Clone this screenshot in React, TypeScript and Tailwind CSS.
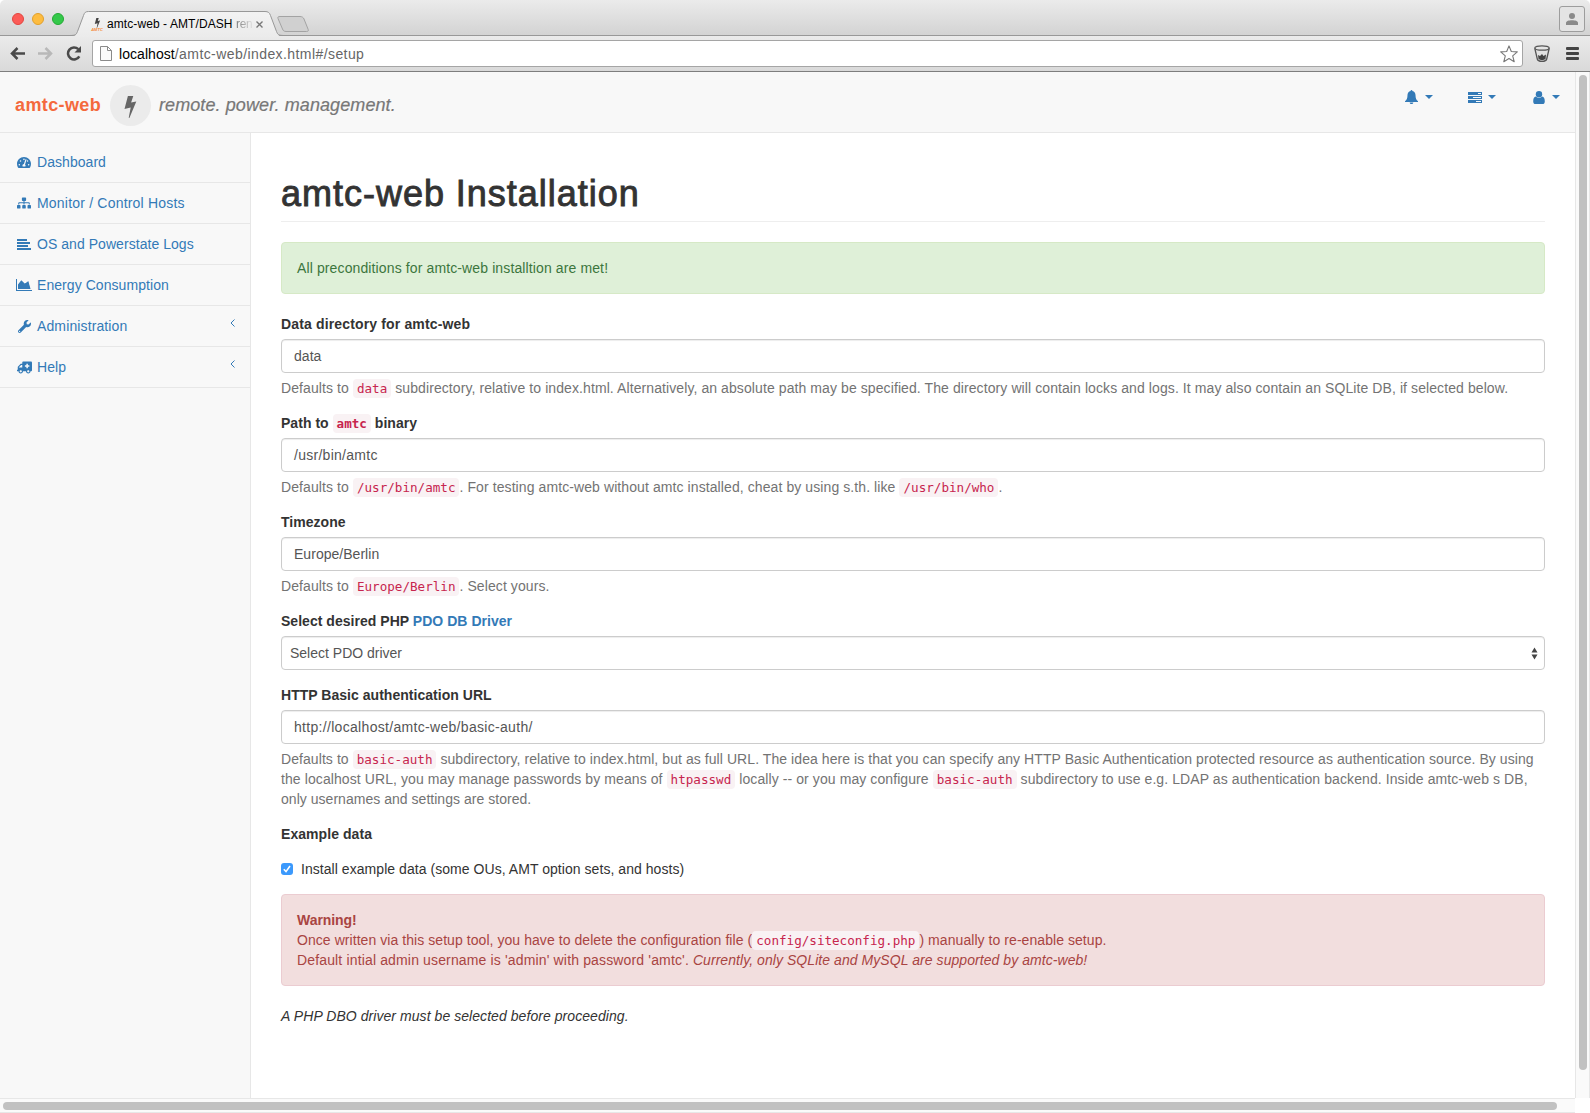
import React from "react";
import { FaSitemap, FaWrench, FaAmbulance, FaTachometerAlt } from "react-icons/fa";

const Code = ({ children, bold = false }: { children: React.ReactNode; bold?: boolean }) => (
  <code
    className={
      "rounded-[4px] bg-[#f9f2f4] px-[4px] py-[2px] font-['DejaVu_Sans_Mono',monospace] text-[12.6px] leading-none tracking-[0px] text-[#c7254e] " +
      (bold ? "font-bold" : "font-normal")
    }
  >
    {children}
  </code>
);

const Label = ({ children, track = "tracking-[0.03px]" }: { children: React.ReactNode; track?: string }) => (
  <label className={"mb-[5px] block h-5 whitespace-nowrap font-bold text-[#333] " + track}>{children}</label>
);

const Field = ({ value, track = "tracking-[0.03px]" }: { value: string; track?: string }) => (
  <div
    className={
      "flex h-[34px] items-center rounded-[4px] border border-[#ccc] bg-white px-3 text-[#555] shadow-[inset_0_1px_1px_rgba(0,0,0,0.075)] " +
      track
    }
  >
    {value}
  </div>
);

const Help = ({ children }: { children: React.ReactNode }) => (
  <div className="mt-[5px] whitespace-nowrap tracking-[0.09px] text-[#737373]">{children}</div>
);

const Caret = () => (
  <svg width="8" height="4" viewBox="0 0 8 4" className="block" fill="currentColor">
    <path d="M0 0h8L4 4z" />
  </svg>
);

const Bolt = ({ className }: { className: string }) => (
  <svg viewBox="0 0 12 22" className={className} fill="currentColor">
    <path d="M3.4 0H8.8L6.6 6.600 11.8 5.400 4.900 22 4.200 21.800 6.200 11.600 0 13z" />
  </svg>
);

const Bell = () => (
  <svg width="13" height="14" viewBox="0.5 0 13 14" fill="currentColor">
    <path d="M7 0c.6 0 .9.4.9.9C10 1.400 11 3.100 11 5c0 3.600.9 5 2.500 6.200V12H.5v-.8C2.100 10 3 8.600 3 5c0-1.900 1-3.600 3.100-4.100C6.100.4 6.400 0 7 0zM5.200 12.400h3.600C8.700 13.400 8 14 7 14s-1.700-.6-1.800-1.600z" />
  </svg>
);

const Tasks = () => (
  <svg width="14" height="11" viewBox="0 0 14 11" shapeRendering="crispEdges">
    <path fill="#337ab7" d="M0 0h14v3H0zM0 4h14v3H0zM0 8h14v3H0z" />
    <path fill="#f8f8f8" d="M10 1h3v1h-3zM5 5h8v1H5zM8 9h5v1H8z" />
  </svg>
);

const User = () => (
  <svg width="12" height="13" viewBox="0 0 12 13" fill="currentColor">
    <circle cx="6" cy="3.200" r="3.200" />
    <path d="M2.900 5.600C1 5.900.2 8 .2 10.400.2 12 1.100 13 2.500 13h7c1.400 0 2.300-1 2.300-2.600 0-2.400-.8-4.500-2.700-4.800C8.300 6.400 7.300 6.900 6 6.900s-2.300-.5-3.100-1.300z" />
  </svg>
);

const Lines = () => (
  <svg width="14" height="11" viewBox="0 0 14 11" fill="currentColor" shapeRendering="crispEdges">
    <path d="M0 0h10v2H0zM0 3h13v2H0zM0 6h11v2H0zM0 9h14v2H0z" />
  </svg>
);

const Area = () => (
  <svg width="16" height="12" viewBox="0 0 16 12" fill="currentColor">
    <path d="M0 0h1v11h15v1H0zM2 10V5.500L5.300 1.300 8.700 4.600 12 3l2.200 7z" />
    <path d="M9 5l3.300-3L14.500 10H9z" />
  </svg>
);

const menu: { label: string; icon: React.ReactNode; sub?: boolean; w: string }[] = [
  { label: "Dashboard", icon: <FaTachometerAlt className="ml-px h-[13px] w-[14px]" />, w: "tracking-[0.05px]" },
  { label: "Monitor / Control Hosts", icon: <FaSitemap className="ml-px h-[12px] w-[14px]" />, w: "tracking-[0.2px]" },
  { label: "OS and Powerstate Logs", icon: <span className="ml-px"><Lines /></span>, w: "tracking-[0.05px]" },
  { label: "Energy Consumption", icon: <Area />, w: "tracking-[0.06px]" },
  { label: "Administration", icon: <FaWrench className="ml-[2px] h-[13px] w-[13px]" />, sub: true, w: "tracking-[0.12px]" },
  { label: "Help", icon: <FaAmbulance className="ml-px h-[13px] w-[15px] -scale-x-100" />, sub: true, w: "tracking-[0.1px]" },
];

const TopBar = () => (
  <div className="relative h-9 shrink-0 rounded-t-[5px] border-b border-[#989898] bg-linear-to-b from-[#ebebeb] to-[#d3d3d3]">
    <div className="flex h-full items-center gap-2 pl-3 pt-[3px]">
      <i className="size-3 rounded-full border border-[#e2463f] bg-[#fc5b57]" />
      <i className="size-3 rounded-full border border-[#e1a02c] bg-[#fdbc40]" />
      <i className="size-3 rounded-full border border-[#24a934] bg-[#34c84a]" />
    </div>
    <svg className="absolute left-[70px] top-[10px]" width="245" height="27" viewBox="0 0 245 27">
      <defs>
        <linearGradient id="tab" x1="0" y1="0" x2="0" y2="1">
          <stop offset="0" stopColor="#f3f3f3" />
          <stop offset="1" stopColor="#ebebeb" />
        </linearGradient>
      </defs>
      <path d="M3 26C6.500 25.500 6.500 24 7.500 21.500L13.500 5.500C14.500 2.500 15.500 1.500 18.500 1.500H195C198 1.500 199.500 2.500 200.500 5.500L206.500 21.500C207.500 24 208 25.500 211 26.500V27H3z" fill="url(#tab)" />
      <path d="M0 25.500C6 25.500 6.500 24 7.500 21.500L13.500 5.500C14.500 2.500 15.500 1.500 18.500 1.500H195C198 1.500 199.500 2.500 200.500 5.500L206.500 21.500C207.500 24 208 25.500 214 25.500" fill="none" stroke="#989898" />
      <path d="M210 6.500H230C232 6.500 233.500 7.500 234 9L238.200 19.500C238.700 21 238 21.500 236.500 21.500H216C214 21.500 213 20.500 212.500 19L208 8.500C207.500 7 208.200 6.500 210 6.500z" fill="#d0d0d0" stroke="#a3a3a3" />
    </svg>
    <div className="absolute left-[91px] top-[17px] flex h-[14px] items-center">
      <div className="flex w-3 flex-col items-center text-[#444]">
        <Bolt className="h-[10px] w-[7px]" />
        <span className="h-[3px] text-[4px] font-bold italic leading-[3px] text-[#f58a33]">AMTC</span>
      </div>
      <span className="ml-1 w-[145px] whitespace-nowrap text-[12px] leading-[14px] tracking-[0.08px] text-black">
        amtc-web - AMT/DASH{" "}
        <span className="bg-linear-to-r from-[#777] to-[#ddd] bg-clip-text tracking-[-0.3px] text-transparent">ren</span>
      </span>
      <svg className="ml-[4px]" width="7" height="7" viewBox="0 0 7 7" stroke="#777" strokeWidth="1.400">
        <path d="M.5.5l6 6M6.500.5l-6 6" />
      </svg>
    </div>
    <div className="absolute right-[5px] top-[6px] flex h-[26px] w-[26px] items-center justify-center rounded-[3px] border border-[#9d9d9d] bg-[#e4e4e4]">
      <svg width="12" height="12" viewBox="0 0 12 12" fill="#8a8a8a">
        <circle cx="6" cy="3" r="3" />
        <path d="M0 12V10C0 8 3 7.300 6 7.300s6 .7 6 2.700v2z" />
      </svg>
    </div>
  </div>
);

const Toolbar = () => (
  <div className="flex h-9 shrink-0 items-center border-b border-[#7e7e7e] bg-linear-to-b from-[#ebebeb] to-[#d9d9d9] pl-[10px]">
    <svg width="15" height="13" viewBox="0 0 15 13" fill="none" stroke="#4a4a4a" strokeWidth="2.500">
      <path d="M15 6.500H2M7.500 1L2 6.500 7.500 12" />
    </svg>
    <svg className="ml-[13px]" width="15" height="13" viewBox="0 0 15 13" fill="none" stroke="#b8b8b8" strokeWidth="2.500">
      <path d="M0 6.500H13M7.500 1L13 6.500 7.500 12" />
    </svg>
    <svg className="ml-[13px]" width="16" height="15" viewBox="0 0 16 15">
      <path d="M12.300 3.200A6 6 0 1 0 13.300 10.300" fill="none" stroke="#4a4a4a" strokeWidth="2.500" />
      <path d="M15 0v6.500H8.500z" fill="#4a4a4a" />
    </svg>
    <div className="ml-[10px] flex h-[27px] w-[1431px] items-center rounded-[3px] border border-[#a5a5a5] bg-white pl-[7px] pr-[4px] text-[14px] text-[#666]">
      <svg width="12" height="15" viewBox="0 0 12 15" fill="#fafafa" stroke="#8a8a8a">
        <path d="M.5.5h7l4 4v10H.5zM7.500.5v4h4" />
      </svg>
      <span className="ml-[7px] tracking-[0.42px]">
        <span className="tracking-[0.06px] text-black">localhost</span>/amtc-web/index.html#/setup
      </span>
      <svg className="ml-auto" width="18" height="18" viewBox="0 0 18 18" fill="#fff" stroke="#777" strokeWidth="1.100" strokeLinejoin="round">
        <path d="M9 .9l2.300 5.600 6 .4-4.600 3.900 1.500 5.900L9 13.500l-5.200 3.200 1.500-5.900L.7 6.900l6-.4z" />
      </svg>
    </div>
    <svg className="ml-[11px]" width="16" height="17" viewBox="0 0 16 17" fill="none" stroke="#555" strokeWidth="1.300">
      <ellipse cx="8" cy="3" rx="7.200" ry="2.200" />
      <path d="M.8 3.300L3.300 14c.3 1.500 2.300 2.300 4.700 2.300s4.400-.8 4.700-2.300L15.200 3.300" />
      <path d="M4 10l2 1 2-2 1.500 2L12 9.500 11.500 14c-2 1.500-5 1.500-7 0z" fill="#444" stroke="none" />
    </svg>
    <svg className="ml-[16px]" width="13" height="13" viewBox="0 0 13 13" fill="#444">
      <rect width="13" height="3" rx="1" />
      <rect y="5" width="13" height="3" rx="1" />
      <rect y="10" width="13" height="3" rx="1" />
    </svg>
  </div>
);

const Header = () => (
  <header className="flex h-[61px] shrink-0 border-b border-[#e7e7e7] bg-[#f8f8f8] pl-[15px] text-[18px]">
    <span className="mt-[23px] w-[95px] whitespace-nowrap font-bold leading-5 tracking-[0.38px] text-[#f4693d]">amtc-web</span>
    <span className="mt-[13px] flex size-[41px] items-center justify-center rounded-full bg-[#ebebeb] text-[#666]">
      <Bolt className="mt-[3px] h-[22px] w-[13px]" />
    </span>
    <span className="ml-[8px] mt-[23px] whitespace-nowrap italic leading-5 tracking-[0.09px] text-[#777] [-webkit-text-stroke:0.2px_#777]">
      remote. power. management.
    </span>
    <div className="ml-auto mr-[15px] mt-[18px] flex h-[14px] items-center text-[#337ab7]">
      <Bell />
      <span className="ml-[7px]"><Caret /></span>
      <span className="ml-[35px]"><Tasks /></span>
      <span className="ml-[6px]"><Caret /></span>
      <span className="ml-[37px]"><User /></span>
      <span className="ml-[7px]"><Caret /></span>
    </div>
  </header>
);

const Sidebar = () => (
  <nav className="w-[250px] shrink-0 pt-[9px]">
    {menu.map((m) => (
      <div key={m.label} className="flex h-[41px] items-center border-b border-[#e7e7e7] pl-4 pr-[15px] text-[#337ab7]">
        <span className="flex w-[21px] items-center">{m.icon}</span>
        <span className={"whitespace-nowrap " + m.w}>{m.label}</span>
        {m.sub && (
          <svg className="mb-[6px] ml-auto" width="5" height="8" viewBox="0 0 5 8" fill="none" stroke="currentColor">
            <path d="M4.500.5L1 4l3.500 3.500" />
          </svg>
        )}
      </div>
    ))}
  </nav>
);

export default function App() {
  return (
    <div className="flex h-[1113px] w-[1590px] flex-col overflow-hidden bg-white font-['Liberation_Sans',Arial,sans-serif] text-[14px] leading-5 text-[#333]">
      <TopBar />
      <Toolbar />
      <div className="flex min-h-0 flex-1">
        <div className="flex w-[1575px] flex-col">
          <div className="flex h-[1026px] flex-col bg-[#f8f8f8]">
            <Header />
            <div className="flex min-h-0 flex-1">
              <Sidebar />
              <main className="-mt-px flex-1 border-l border-t border-[#e7e7e7] bg-white pl-[30px] pr-[30px]">
                <h1 className="mt-[41px] h-[48px] border-b border-[#eee] text-[36px] leading-[40px] tracking-[0.98px] [-webkit-text-stroke:0.9px_#333]">
                  amtc-web Installation
                </h1>
                <div className="mt-5 h-[52px] rounded-[4px] border border-[#d6e9c6] bg-[#dff0d8] p-[15px] tracking-[0.12px] text-[#3c763d]">
                  All preconditions for amtc-web installtion are met!
                </div>
                <form className="mt-5 flex flex-col gap-[15px]">
                  <div>
                    <Label track="tracking-[0.15px]">Data directory for amtc-web</Label>
                    <Field value="data" />
                    <Help>
                      Defaults to <Code>data</Code> subdirectory, relative to index.html. Alternatively, an absolute path may be specified. The directory will contain locks and logs. It may also contain an SQLite DB, if selected below.
                    </Help>
                  </div>
                  <div>
                    <Label>Path to <Code bold>amtc</Code> binary</Label>
                    <Field value="/usr/bin/amtc" track="tracking-[0.27px]" />
                    <Help>
                      Defaults to <Code>/usr/bin/amtc</Code>. For testing amtc-web without amtc installed, cheat by using s.th. like <Code>/usr/bin/who</Code>.
                    </Help>
                  </div>
                  <div>
                    <Label>Timezone</Label>
                    <Field value="Europe/Berlin" />
                    <Help>
                      Defaults to <Code>Europe/Berlin</Code>. Select yours.
                    </Help>
                  </div>
                  <div>
                    <Label>Select desired PHP <span className="text-[#337ab7]">PDO DB Driver</span></Label>
                    <div className="flex h-[34px] items-center justify-between rounded-[4px] border border-[#ccc] bg-white pl-2 pr-[6px] text-[#555] shadow-[inset_0_1px_1px_rgba(0,0,0,0.075)]">
                      Select PDO driver
                      <svg width="7" height="13" viewBox="0 0 7 13" fill="#444">
                        <path d="M3.500 0.500L6.500 5.500H.5zM3.500 12.500L6.500 7.500H.5z" />
                      </svg>
                    </div>
                  </div>
                  <div>
                    <Label>HTTP Basic authentication URL</Label>
                    <Field value="http://localhost/amtc-web/basic-auth/" track="tracking-[0.31px]" />
                    <Help>
                      <span className="tracking-[0.07px]">
                        Defaults to <Code>basic-auth</Code> subdirectory, relative to index.html, but as full URL. The idea here is that you can specify any HTTP Basic Authentication protected resource as authentication source. By using
                      </span>
                      <br />
                      the localhost URL, you may manage passwords by means of <Code>htpasswd</Code> locally -- or you may configure <Code>basic-auth</Code> subdirectory to use e.g. LDAP as authentication backend. Inside amtc-web s DB,
                      <br />
                      <span className="tracking-[0.03px]">only usernames and settings are stored.</span>
                    </Help>
                  </div>
                  <div>
                    <div className="font-bold tracking-[0.06px]">Example data</div>
                    <div className="mt-[15px] flex items-center">
                      <span className="flex size-3 items-center justify-center rounded-[3px] bg-[#3b99fc]">
                        <svg width="8" height="8" viewBox="0 0 8 8" fill="none" stroke="#fff" strokeWidth="1.600">
                          <path d="M.8 4.300L3 6.600 7 1" />
                        </svg>
                      </span>
                      <span className="ml-2 whitespace-nowrap tracking-[0.05px]">Install example data (some OUs, AMT option sets, and hosts)</span>
                    </div>
                  </div>
                </form>
                <div className="mt-[15px] h-[92px] whitespace-nowrap rounded-[4px] border border-[#ebccd1] bg-[#f2dede] p-[15px] tracking-[0.06px] text-[#a94442]">
                  <b className="tracking-[-0.05px]">Warning!</b>
                  <br />
                  Once written via this setup tool, you have to delete the configuration file (<Code>config/siteconfig.php</Code>) manually to re-enable setup.
                  <br />
                  <span className="tracking-[0.15px]">Default intial admin username is 'admin' with password 'amtc'.</span>{" "}
                  <i>Currently, only SQLite and MySQL are supported by amtc-web!</i>
                </div>
                <p className="mt-5 italic tracking-[0.06px]">A PHP DBO driver must be selected before proceeding.</p>
              </main>
            </div>
          </div>
          <div className="h-[15px] border-y border-[#e7e7e7] bg-[#fafafa] pl-[3px] pt-[3px]">
            <div className="h-2 w-[1554px] rounded-full bg-[#c1c1c1]" />
          </div>
        </div>
        <div className="h-[1026px] w-[15px] border-x border-[#e7e7e7] bg-[#fafafa] pl-[3px] pt-[3px]">
          <div className="h-[995px] w-2 rounded-full bg-[#c1c1c1]" />
        </div>
      </div>
    </div>
  );
}
